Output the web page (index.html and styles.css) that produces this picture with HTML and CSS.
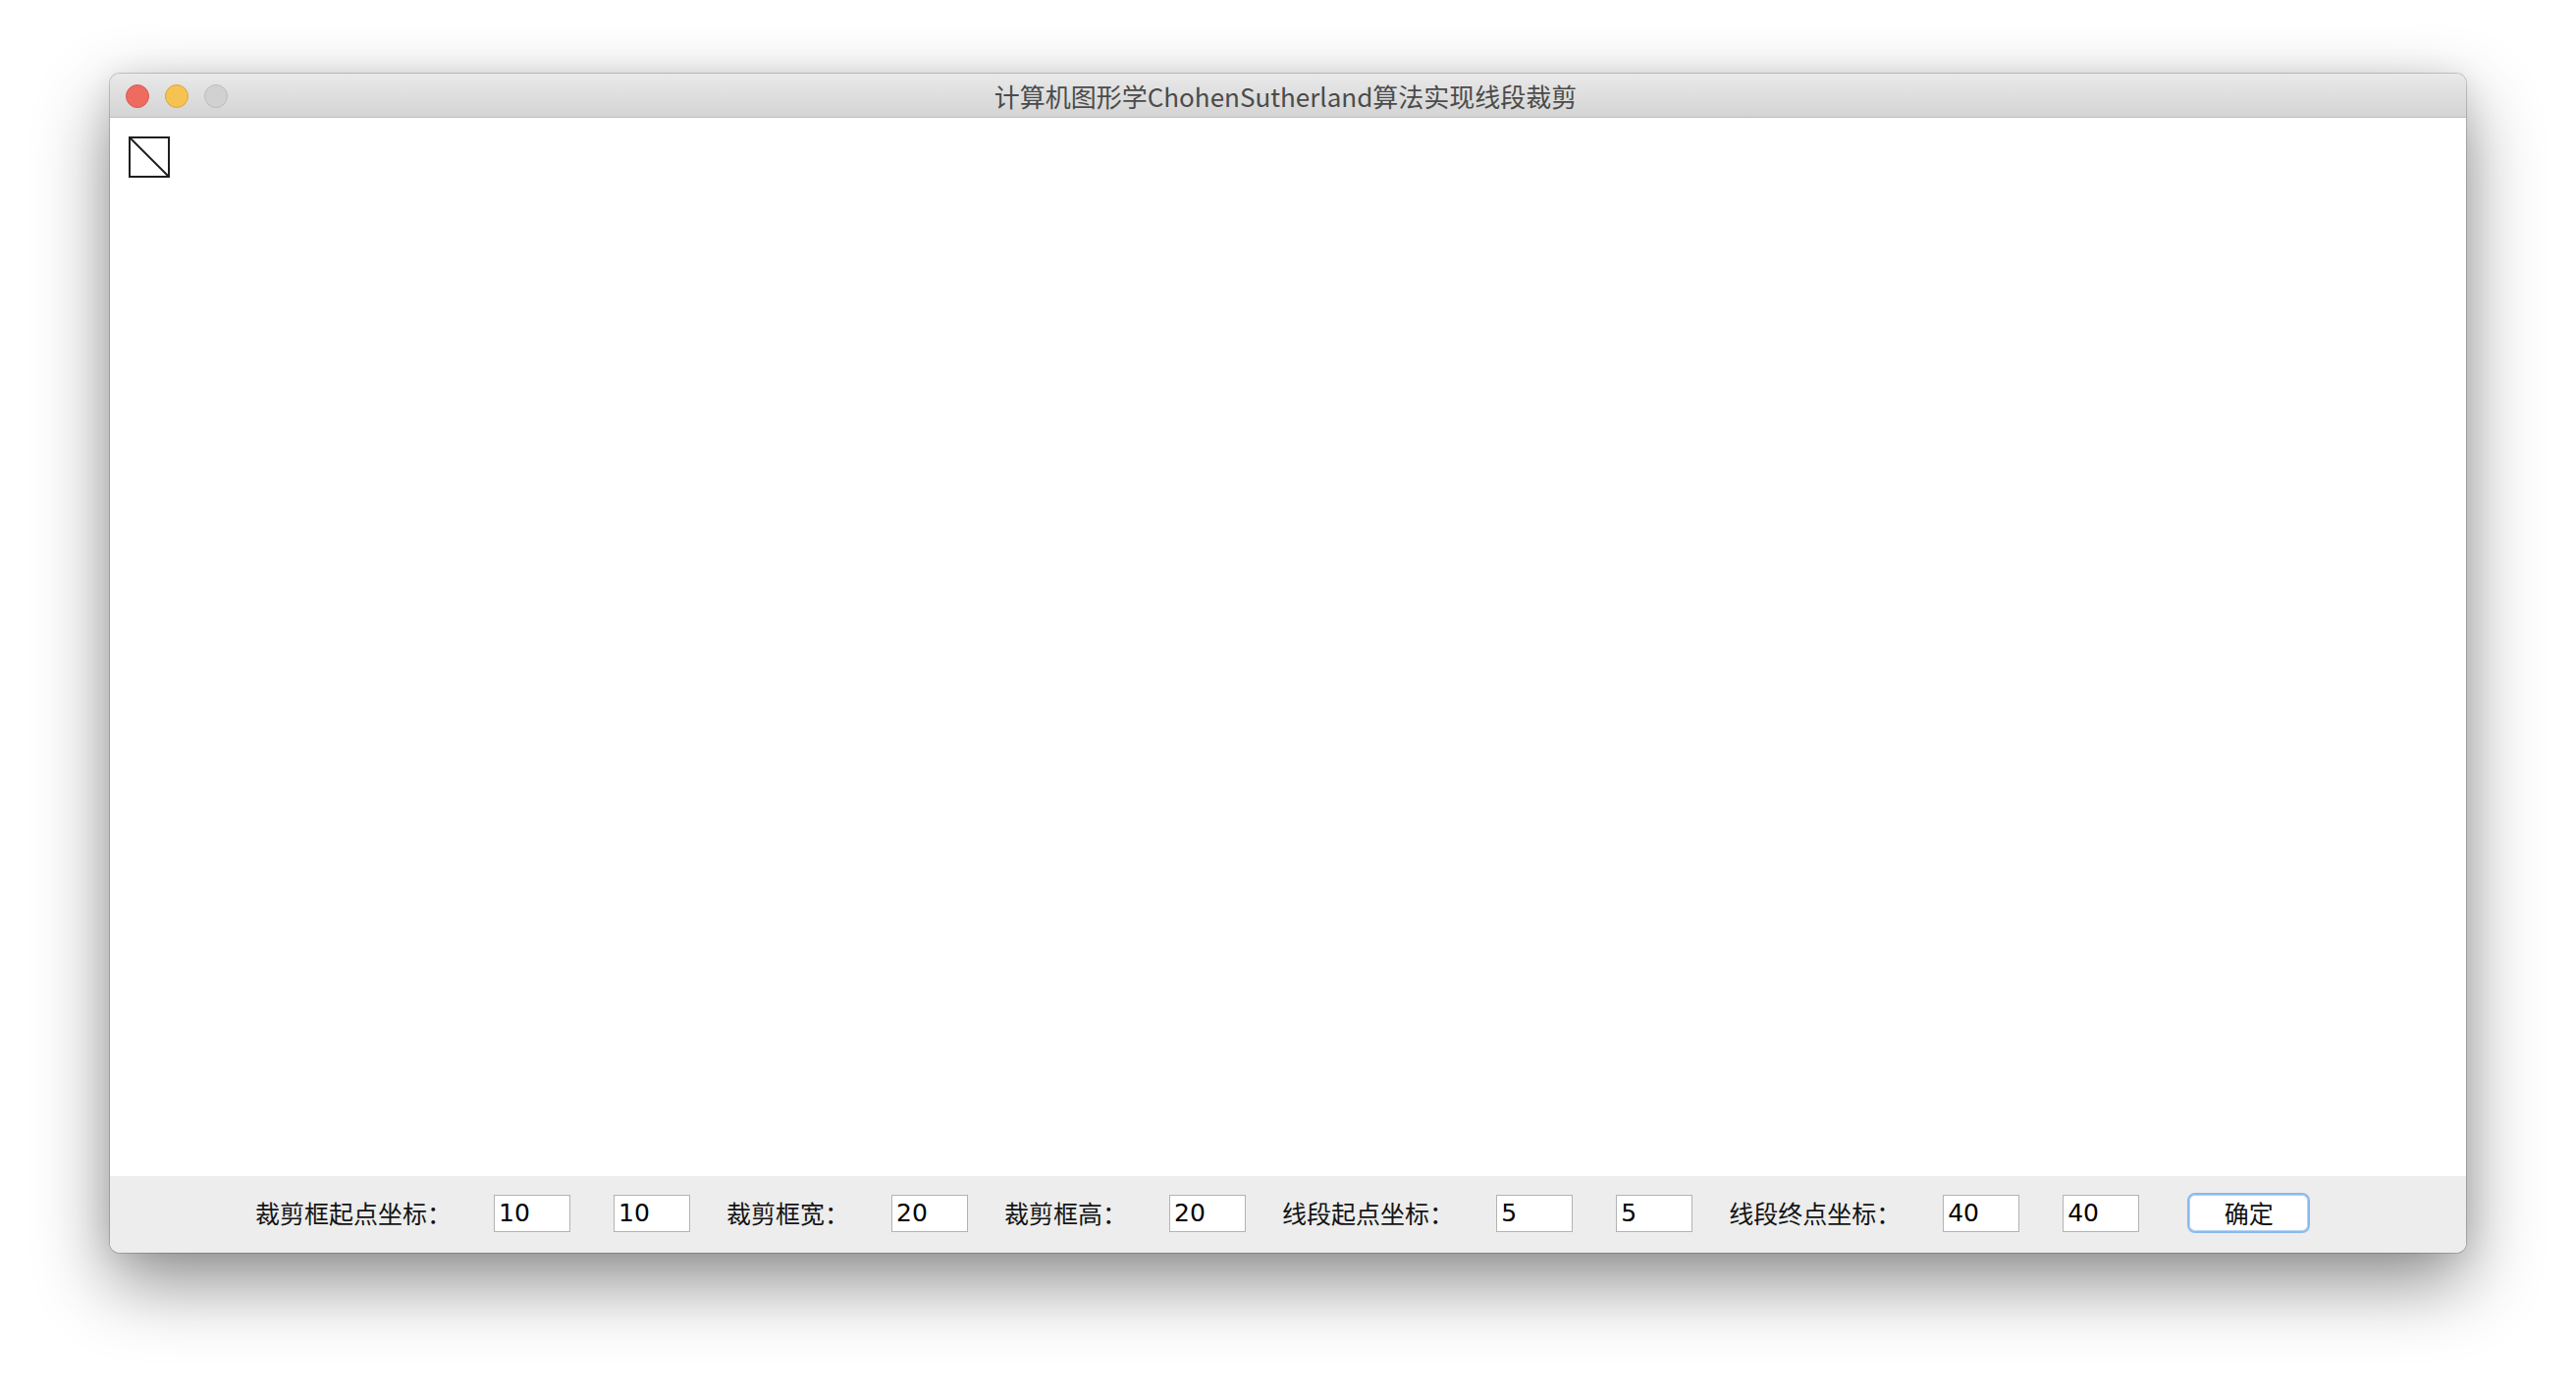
FILE: index.html
```html
<!DOCTYPE html>
<html lang="zh-CN">
<head>
<meta charset="utf-8">
<title>计算机图形学ChohenSutherland算法实现线段裁剪</title>
<link rel="stylesheet" href="styles.css">
</head>
<body>
<div class="window">
  <div class="titlebar">
    <div class="lights">
      <span class="light close"></span>
      <span class="light minimize"></span>
      <span class="light zoom"></span>
    </div>
    <div class="title">计算机图形学ChohenSutherland算法实现线段裁剪</div>
  </div>
  <div class="canvas">
    <svg class="clip-drawing" width="42" height="42" viewBox="0 0 42 42">
      <rect x="1" y="1" width="40" height="40" fill="none" stroke="#1e1e1e" stroke-width="2"/>
      <line x1="1" y1="1" x2="41" y2="41" stroke="#1e1e1e" stroke-width="2"/>
    </svg>
  </div>
  <div class="controls">
    <div class="group">
      <span class="label">裁剪框起点坐标<span class="colon">：</span></span>
      <input class="field" type="text" value="10">
      <input class="field" type="text" value="10">
    </div>
    <div class="group">
      <span class="label">裁剪框宽<span class="colon">：</span></span>
      <input class="field" type="text" value="20">
    </div>
    <div class="group">
      <span class="label">裁剪框高<span class="colon">：</span></span>
      <input class="field" type="text" value="20">
    </div>
    <div class="group">
      <span class="label">线段起点坐标<span class="colon">：</span></span>
      <input class="field" type="text" value="5">
      <input class="field" type="text" value="5">
    </div>
    <div class="group">
      <span class="label">线段终点坐标<span class="colon">：</span></span>
      <input class="field" type="text" value="40">
      <input class="field" type="text" value="40">
    </div>
    <button class="ok" type="button">确定</button>
  </div>
</div>
</body>
</html>
```

FILE: styles.css
```css
html, body {
  margin: 0;
  padding: 0;
  background: #ffffff;
}

body {
  box-sizing: border-box;
  min-height: 1424px;
  padding: 75px 0 0 112px;
  font-family: "Noto Sans CJK SC", sans-serif;
}

.window {
  width: 2400px;
  height: 1201px;
  display: flex;
  flex-direction: column;
  border-radius: 10px;
  overflow: hidden;
  box-shadow: 0 0 0 1px rgba(0, 0, 0, 0.18), 0 30px 75px rgba(0, 0, 0, 0.45), 0 0 30px rgba(0, 0, 0, 0.08);
  background: #ffffff;
}

.titlebar {
  position: relative;
  height: 44px;
  flex: none;
  background: linear-gradient(#e9e9e9, #d4d4d4);
  border-bottom: 1px solid #bdbdbd;
  display: flex;
  align-items: center;
  justify-content: center;
}

.lights {
  position: absolute;
  left: 16px;
  top: 11px;
  display: flex;
  gap: 16px;
}

.light {
  width: 22px;
  height: 22px;
  border-radius: 50%;
  border: 1px solid transparent;
}

.close {
  background: #ee6b60;
  border-color: #d55b50;
}

.minimize {
  background: #f6c251;
  border-color: #d9a63d;
}

.zoom {
  background: #d1d1d1;
  border-color: #bcbcbc;
}

.title {
  font-size: 26px;
  color: #4b4b4b;
  line-height: 1;
  margin-left: -5px;
  margin-top: 1px;
}

.canvas {
  flex: 1;
  background: #ffffff;
  padding: 19px 0 0 19px;
}

.clip-drawing {
  display: block;
}

.controls {
  box-sizing: border-box;
  height: 78px;
  flex: none;
  background: #ededed;
  display: flex;
  align-items: center;
  padding: 0 0 3px 148px;
  gap: 37px;
}

.group {
  display: flex;
  align-items: center;
  gap: 44px;
}

.label {
  font-size: 25px;
  color: #141414;
  line-height: 1;
  margin-right: -1px;
  white-space: nowrap;
}

.colon {
  font-family: "Noto Sans CJK TC", sans-serif;
}

.field {
  box-sizing: border-box;
  width: 78px;
  height: 38px;
  margin: 0;
  padding: 0 0 0 4px;
  border: 1px solid #b3b3b3;
  border-radius: 0;
  background: #ffffff;
  font-family: "DejaVu Sans", sans-serif;
  font-size: 25px;
  color: #000000;
  outline: none;
}

.ok {
  box-sizing: border-box;
  margin-left: 12px;
  width: 125px;
  height: 41px;
  padding: 0;
  border: 2px solid #8ab8f0;
  border-radius: 8px;
  background: #ffffff;
  box-shadow: inset 0 0 0 1px #b7d2f5;
  font-family: "Noto Sans CJK SC", sans-serif;
  font-size: 25px;
  color: #111111;
  line-height: 1;
}
```
